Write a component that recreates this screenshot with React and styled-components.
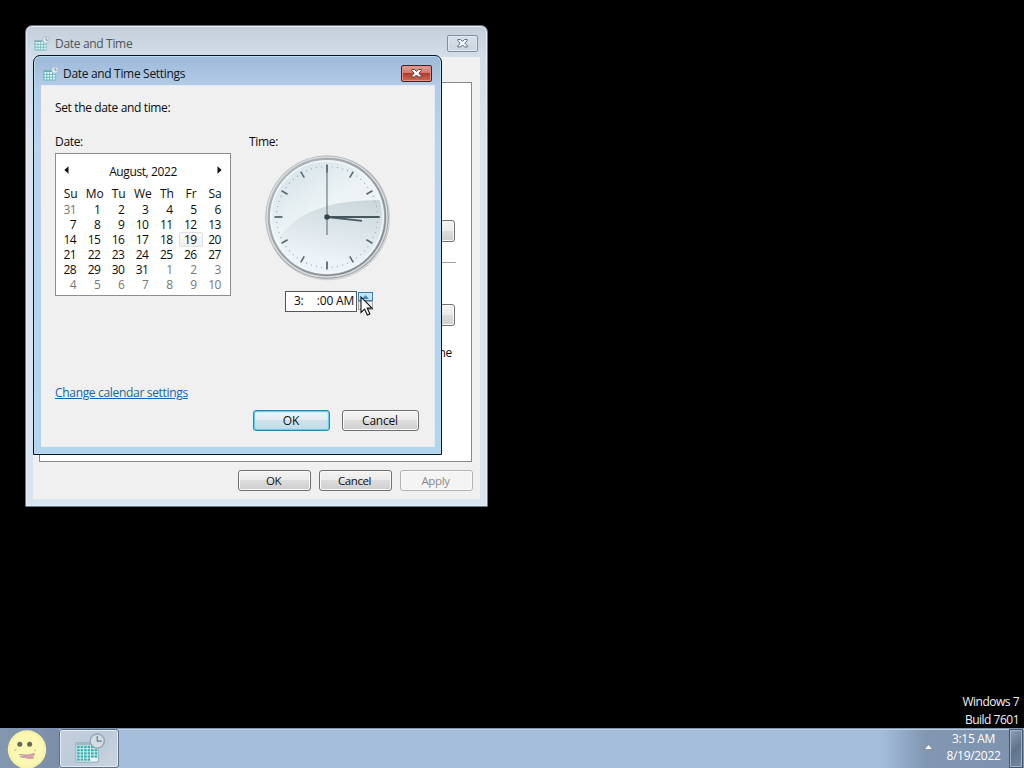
import styled, { createGlobalStyle, css } from "styled-components";

const DAY_NAMES = ["Su", "Mo", "Tu", "We", "Th", "Fr", "Sa"];

// Sunday July 31st up to Saturday September 10th
const days = Array.from({ length: 42 }, (_, i) => {
   if (i === 0) return { label: 31, muted: true };
   if (i <= 31) return { label: i, muted: false };
   return { label: i - 31, muted: true };
});

const ticks = Array.from({ length: 60 }, (_, i) => i);

const CalendarIcon = ({ size }) => (
   <svg width={size} height={size} viewBox="0 0 32 32">
      <path d="M2 10h23v20H2z" fill="#e9f6f8" stroke="#7f9da8" strokeWidth="0.8" />
      <path d="M2 9.5h23v3.5H2z" fill="#9dbac5" />
      {[0, 1, 2, 3, 4].map((r) =>
         [0, 1, 2, 3, 4, 5].map((c) =>
            r === 4 && c > 3 ? null : (
               <rect
                  key={`${r}-${c}`}
                  x={3.2 + c * 3.6}
                  y={13.5 + r * 3.2}
                  width="2.7"
                  height="2.3"
                  fill="#2faeb0"
               />
            )
         )
      )}
      <circle cx="24" cy="8.3" r="7.3" fill="#d3dde4" stroke="#9aa7b0" strokeWidth="1.5" />
      <path d="M24 3.200v5.200h4.600" fill="none" stroke="#667781" strokeWidth="1.2" />
   </svg>
);

const SmallCalendarIcon = ({ faded }) => (
   <svg width="16" height="16" viewBox="0 0 16 16" opacity={faded ? 0.85 : 1}>
      <path d="M.5 4.500h12v10H.5z" fill="#5fb3b8" />
      <path d="M.5 4.500h12" stroke="#8fa9ae" strokeWidth="1" />
      {[0, 1, 2].map((r) =>
         [0, 1, 2, 3].map((c) => (
            <rect
               key={`${r}-${c}`}
               x={1.5 + c * 2.8}
               y={6 + r * 2.8}
               width="2"
               height="1.9"
               fill="#e6fbfa"
            />
         ))
      )}
      <circle cx="12" cy="3.900" r="3.400" fill="#e3edf5" stroke="#9fb0be" strokeWidth="0.8" />
      <path d="M12 1.500v2.700h2" fill="none" stroke="#6f8393" strokeWidth="0.9" />
   </svg>
);

const CloseGlyph = ({ fill, edge }) => (
   <svg width="13" height="11" viewBox="0 0 13 11">
      <path
         d="M1.800 1.500h2.700l2 2 2-2h2.700v1.200L8.900 5.200l2.300 2.600v1.200H8.500l-2-2-2 2H1.800V7.800l2.300-2.600-2.300-2.500z"
         fill={fill}
         stroke={edge}
         strokeWidth="1"
         strokeLinejoin="round"
      />
   </svg>
);

const Clock = () => (
   <svg width="130" height="130" viewBox="-65 -65 130 130">
      <defs>
         <linearGradient id="rim" x1="0" y1="0" x2="1" y2="1">
            <stop offset="0" stopColor="#b9bec2" />
            <stop offset="0.5" stopColor="#989da2" />
            <stop offset="1" stopColor="#777d83" />
         </linearGradient>
         <linearGradient id="face" x1="0.15" y1="0" x2="0.8" y2="1">
            <stop offset="0" stopColor="#d3e1e7" />
            <stop offset="0.45" stopColor="#eef4f6" />
            <stop offset="1" stopColor="#edf2f5" />
         </linearGradient>
         <linearGradient id="wave" x1="0.75" y1="0" x2="0.5" y2="1">
            <stop offset="0" stopColor="#cbd8db" />
            <stop offset="0.4" stopColor="#dce5e9" />
            <stop offset="0.8" stopColor="#edf3f8" />
         </linearGradient>
         <clipPath id="dial">
            <circle r="56.5" />
         </clipPath>
      </defs>
      <circle cx="0.8" cy="1" r="62.3" fill="#cfd1d3" />
      <circle r="61.5" fill="url(#rim)" />
      <circle r="60" fill="none" stroke="#d9dde0" strokeWidth="1.6" />
      <circle r="57.5" fill="url(#face)" stroke="#9ca4aa" strokeWidth="0.8" />
      <path
         d="M-46 18C-30 -4 2 -18 58 -17V60H-46z"
         fill="url(#wave)"
         clipPath="url(#dial)"
      />
      <circle r="56" fill="none" stroke="#f2f7f9" strokeWidth="2" opacity="0.8" />
      {ticks.map((i) =>
         i % 5 === 0 ? (
            <line
               key={i}
               y1="-52.5"
               y2={i % 15 === 0 ? -44.5 : -45.5}
               stroke="#596a70"
               strokeWidth={i % 15 === 0 ? 1.8 : 1.6}
               transform={`rotate(${i * 6})`}
            />
         ) : (
            <circle key={i} cy="-50.5" r="0.6" fill="#93a2a9" transform={`rotate(${i * 6})`} />
         )
      )}
      <line x1="0" y1="0" x2="35" y2="3.8" stroke="#4a5c61" strokeWidth="1.8" />
      <line x1="0" y1="0" x2="52.5" y2="0" stroke="#45575c" strokeWidth="1.8" />
      <line x1="0" y1="-52" x2="0" y2="18" stroke="#5d7075" strokeWidth="1.1" />
      <circle r="2.7" fill="#33474d" />
   </svg>
);

const Smiley = () => (
   <svg width="40" height="38" viewBox="0 0 40 38">
      <circle cx="20" cy="19.5" r="19.2" fill="#f6f3a9" />
      <circle cx="20" cy="19.5" r="16.5" fill="#fbf8b4" />
      <circle cx="12.8" cy="14.2" r="2.5" fill="#66655f" />
      <circle cx="22.6" cy="14.2" r="2.5" fill="#66655f" />
      <path d="M7 20.500l2.500-1M27 19.500l2 1.500" stroke="#d6a984" strokeWidth="1" />
      <path
         d="M12 24.500l8 .6 7.500-1.600-.5 2-3 .3 3 2.200-5 .4-9-1.600 7-1z"
         fill="#d9a5ad"
         stroke="#c497a0"
         strokeWidth="0.8"
      />
   </svg>
);

const Cursor = () => (
   <svg width="14" height="21" viewBox="0 0 14 21">
      <path
         d="M1 1v15.500l3.600-3.400 2.700 6 2.600-1.200-2.700-5.800H12z"
         fill="#fff"
         stroke="#111"
         strokeWidth="1.1"
      />
   </svg>
);

export default function App() {
   return (
      <>
         <GlobalStyle />
         <Screen>
            <Desktop>
               <Watermark>
                  <Text>Windows 7</Text>
                  <Text>Build 7601</Text>
               </Watermark>
            </Desktop>

            <BackWindow>
               <BackTitle>
                  <SmallCalendarIcon faded />
                  <TitleText $faded>Date and Time</TitleText>
                  <CloseButton>
                     <CloseGlyph fill="#f4f7fa" edge="#5f6d80" />
                  </CloseButton>
               </BackTitle>
               <BackClient>
                  <TabPage>
                     <HiddenButton />
                     <Separator />
                     <HiddenButton />
                     <PageNote>change the time zone</PageNote>
                  </TabPage>
                  <BackButtons>
                     <Button $width={73} $tight>OK</Button>
                     <Button $width={73} $tight>Cancel</Button>
                     <Button $width={73} $tight $disabled>Apply</Button>
                  </BackButtons>
               </BackClient>
            </BackWindow>

            <FrontWindow>
               <FrontTitle>
                  <SmallCalendarIcon />
                  <TitleText>Date and Time Settings</TitleText>
                  <CloseButton $active>
                     <CloseGlyph fill="#fff" edge="#5b4444" />
                  </CloseButton>
               </FrontTitle>
               <FrontClient>
                  <Heading>Set the date and time:</Heading>
                  <Columns>
                     <DateColumn>
                        <Label>Date:</Label>
                        <Calendar>
                           <MonthBar>
                              <svg width="5" height="8" viewBox="0 0 5 8">
                                 <path d="M4.500 .3v7.400L.3 4z" fill="#111" />
                              </svg>
                              <Month>August, 2022</Month>
                              <svg width="5" height="8" viewBox="0 0 5 8">
                                 <path d="M.5 .3v7.400L4.700 4z" fill="#111" />
                              </svg>
                           </MonthBar>
                           <Grid>
                              {DAY_NAMES.map((name) => (
                                 <DayName key={name}>{name}</DayName>
                              ))}
                              {days.map((day, index) => (
                                 <Day
                                    key={index}
                                    $muted={day.muted}
                                    $selected={!day.muted && day.label === 19}
                                 >
                                    {day.label}
                                 </Day>
                              ))}
                           </Grid>
                        </Calendar>
                     </DateColumn>
                     <TimeColumn>
                        <Label>Time:</Label>
                        <ClockHolder>
                           <Clock />
                        </ClockHolder>
                        <TimeRow>
                           <TimeField>
                              <span>3:</span>
                              <TimeRest>:00 AM</TimeRest>
                           </TimeField>
                           <Spinner>
                              <SpinButton $hot>
                                 <svg width="7" height="4" viewBox="0 0 7 4">
                                    <path d="M0 4L3.500 0 7 4z" fill="#4787b2" />
                                 </svg>
                              </SpinButton>
                              <SpinButton>
                                 <svg width="7" height="4" viewBox="0 0 7 4">
                                    <path d="M0 0h7L3.500 4z" fill="#555" />
                                 </svg>
                              </SpinButton>
                           </Spinner>
                        </TimeRow>
                     </TimeColumn>
                  </Columns>
                  <Link>Change calendar settings</Link>
                  <FrontButtons>
                     <Button $width={77} $primary>OK</Button>
                     <Button $width={77}>Cancel</Button>
                  </FrontButtons>
               </FrontClient>
            </FrontWindow>

            <Taskbar>
               <Start>
                  <Smiley />
               </Start>
               <TaskButton>
                  <CalendarIcon size={31} />
               </TaskButton>
               <Tray>
                  <TrayArrow width="9" height="6" viewBox="0 0 9 6">
                     <path d="M.3 5.500L4.500 .5l4.200 5z" fill="#fff" stroke="#4f6279" strokeWidth="0.5" />
                  </TrayArrow>
                  <TrayClock>
                     <span>3:15 AM</span>
                     <span>8/19/2022</span>
                  </TrayClock>
                  <ShowDesktop />
               </Tray>
            </Taskbar>

            <Pointer>
               <Cursor />
            </Pointer>
         </Screen>
      </>
   );
}

const GlobalStyle = createGlobalStyle`
   * {
      box-sizing: border-box;
   }

   body {
      margin: 0;
      background: #000;
      font-family: "Open Sans", "Noto Sans", sans-serif;
      font-size: 12px;
      letter-spacing: -0.32px;
      color: #0c0c0c;
      overflow: hidden;
   }

   svg {
      display: block;
      flex: none;
   }
`;

const Screen = styled.div`
   position: relative;
   display: flex;
   flex-direction: column;
   width: 1024px;
   height: 768px;
   overflow: hidden;
`;

const Desktop = styled.main`
   flex: 1;
   display: flex;
   align-items: flex-end;
   justify-content: flex-end;
`;

const Watermark = styled.div`
   padding: 0 5px 0 0;
   margin-bottom: -1px;
   color: #f2f2f2;
   text-align: right;
   letter-spacing: -0.5px;
`;

const Text = styled.div`
   line-height: 18px;
`;

const windowFrame = css`
   position: absolute;
   display: flex;
   flex-direction: column;
`;

const BackWindow = styled.section`
   ${windowFrame}
   left: 25px;
   top: 25px;
   width: 463px;
   height: 482px;
   padding: 0 7px 7px;
   border: 1px solid #6d7780;
   border-radius: 7px 7px 0 0;
   background: linear-gradient(#c3ced9, #d3dde8 30px, #dce4ec 120px, #d9e5ef);
   box-shadow: inset 0 0 0 1px #e6edf3;
`;

const FrontWindow = styled.section`
   ${windowFrame}
   left: 33px;
   top: 55px;
   width: 409px;
   height: 400px;
   padding: 0 6px 7px 7px;
   border: 1px solid #07131f;
   border-radius: 7px 7px 0 0;
   background: linear-gradient(#9db9d9, #b3cbe6 30px, #bdd2ec 90px, #b3d3f0 240px, #b2d4ec);
   box-shadow: inset 0 0 0 1px #b9dcee;
`;

const titleBar = css`
   display: flex;
   align-items: center;
   flex: none;
`;

const BackTitle = styled.header`
   ${titleBar}
   height: 31px;
   padding: 4px 2px 0 1px;
`;

const FrontTitle = styled.header`
   ${titleBar}
   height: 29px;
   padding: 6px 3px 0 2px;
`;

const TitleText = styled.h1`
   flex: 1;
   margin: 0 0 0 ${({ $faded }) => ($faded ? 5 : 4)}px;
   font-size: inherit;
   font-weight: 400;
   line-height: 16px;
   color: ${({ $faded }) => ($faded ? "#4c545c" : "#0d1722")};
`;

const CloseButton = styled.button`
   display: flex;
   align-items: center;
   justify-content: center;
   width: 31px;
   height: 17px;
   padding: 0;
   border: 1px solid ${({ $active }) => ($active ? "#4c2023" : "#7f8ea3")};
   border-radius: 2px;
   background: ${({ $active }) =>
      $active
         ? "linear-gradient(#e0a198, #cf7568 48%, #b43b2a 50%, #cf6a56)"
         : "linear-gradient(#d7e0e9, #cbd6e2)"};
   box-shadow: inset 0 0 0 1px ${({ $active }) => ($active ? "#dd9288" : "#dfe7ef")};
`;

const BackClient = styled.div`
   flex: 1;
   padding: 25px 8px 0 6px;
   background: #f0f0f0;
`;

const TabPage = styled.div`
   display: flex;
   flex-direction: column;
   align-items: flex-end;
   width: 433px;
   height: 380px;
   padding: 137px 16px 0 0;
   border: 1px solid #84878c;
   background: #fff;
`;

const buttonFace = "linear-gradient(#f3f3f3, #ebebeb 48%, #dcdcdc 50%, #cfcfcf)";

const HiddenButton = styled.div`
   width: 140px;
   height: 22px;
   border: 1px solid #707070;
   border-radius: 3px;
   background: ${buttonFace};
   box-shadow: inset 0 0 0 1px #fafafa;
`;

const Separator = styled.div`
   width: 400px;
   height: 1px;
   margin: 20px -1px 41px 0;
   background: #a0a0a0;
`;

const PageNote = styled.p`
   margin: 19px 3px 0 0;
   line-height: 16px;
`;

const BackButtons = styled.div`
   display: flex;
   gap: 8px;
   justify-content: flex-end;
   width: 434px;
   padding-top: 8px;
`;

const Button = styled.button`
   width: ${({ $width }) => $width}px;
   height: 21px;
   padding: ${({ $tight }) => ($tight ? "1px 2px 0 0" : "0 1px 0 0")};
   border: 1px solid #707070;
   border-radius: 3px;
   background: ${buttonFace};
   box-shadow: inset 0 0 0 1px #fafafa;
   color: #111;
   font: inherit;
   font-size: ${({ $tight }) => ($tight ? 11.5 : 12)}px;
   line-height: 18px;
   letter-spacing: ${({ $tight }) => ($tight ? "-0.4px" : "-0.2px")};

   ${({ $primary }) =>
      $primary &&
      css`
         border-color: #2d86a3;
         background: linear-gradient(#eef5f8, #e2edf2 48%, #cfe2eb 50%, #c3dbe6);
         box-shadow: inset 0 0 0 1px #5fd0ee, inset 0 0 2px 1px #9be0f2;
      `}

   ${({ $disabled }) =>
      $disabled &&
      css`
         border-color: #b0b4b8;
         background: #f4f4f4;
         color: #8a8a8a;
      `}
`;

const FrontClient = styled.div`
   flex: 1;
   padding: 14px 14px 0 14px;
   border: 1px solid #e3ebf3;
   border-width: 1px 1px 1px 0;
   background: #f0f0f0;
`;

const Heading = styled.p`
   margin: 0;
   line-height: 16px;
   letter-spacing: -0.36px;
`;

const Columns = styled.div`
   display: flex;
   height: 269px;
   padding-top: 18px;
`;

const DateColumn = styled.div`
   width: 194px;
`;

const TimeColumn = styled.div`
   width: 170px;
`;

const Label = styled.div`
   height: 19px;
   line-height: 16px;
`;

const Calendar = styled.div`
   width: 176px;
   height: 143px;
   border: 1px solid #8a8d92;
   background: #fff;
`;

const MonthBar = styled.div`
   display: flex;
   align-items: center;
   justify-content: space-between;
   height: 32px;
   padding: 0 8px;

   svg {
      margin-bottom: 1px;
   }
`;

const Month = styled.span`
   padding-top: 2px;
   letter-spacing: -0.4px;
`;

const Grid = styled.div`
   display: grid;
   grid-template-columns: repeat(7, 24.1px);
   grid-template-rows: 15px;
   grid-auto-rows: 15px;
   padding-left: 2.5px;
`;

const DayName = styled.span`
   line-height: 15px;
   text-align: center;
   letter-spacing: -0.1px;
`;

const Day = styled.span`
   position: relative;
   top: 1px;
   padding-right: ${({ $selected }) => ($selected ? 5.5 : 6.5)}px;
   line-height: ${({ $selected }) => ($selected ? 13 : 15)}px;
   text-align: right;
   letter-spacing: -0.6px;
   color: ${({ $muted }) => ($muted ? "#777" : "#0c0c0c")};
   ${({ $selected }) =>
      $selected &&
      css`
         border: 1px solid #e0e0e2;
         border-radius: 2px;
         background: linear-gradient(#fafafa, #f1f1f1);
      `}
`;

const ClockHolder = styled.div`
   display: flex;
   height: 138px;
   padding: 0 0 0 12.5px;

   svg {
      margin-top: -1.5px;
      transform: translate(-0.01px, 0);
   }
`;

const TimeRow = styled.div`
   display: flex;
   padding-left: 36px;
   gap: 1px;
`;

const TimeField = styled.div`
   display: flex;
   justify-content: space-between;
   width: 72px;
   height: 21px;
   padding: 0 2px 0 8px;
   border: 1px solid #54585c;
   background: #fff;
   line-height: 18px;
`;

const TimeRest = styled.span`
   white-space: nowrap;
   letter-spacing: -0.2px;
`;

const Spinner = styled.div`
   display: flex;
   flex-direction: column;
   padding-top: 1px;
`;

const SpinButton = styled.div`
   display: flex;
   align-items: center;
   justify-content: center;
   width: 15px;
   height: 9px;
   border: 1px solid ${({ $hot }) => ($hot ? "#3c7fb1" : "#a5a8ab")};
   background: ${({ $hot }) => ($hot ? "#c4e5f6" : "#ededed")};
`;

const Link = styled.a`
   display: block;
   width: max-content;
   line-height: 16px;
   color: #1463b4;
   text-decoration: underline;
   text-underline-offset: 1px;
`;

const FrontButtons = styled.div`
   display: flex;
   justify-content: flex-end;
   gap: 12px;
   padding: 9px 1px 0 0;
`;

const Taskbar = styled.footer`
   display: flex;
   height: 40px;
   border-top: 1px solid #7f97b0;
   background: linear-gradient(90deg, #a5bedc 880px, #8197b2 925px, #7c92ad);
   box-shadow: inset 0 1px 0 #bfd0e2;
`;

const Start = styled.div`
   display: flex;
   width: 59px;
   padding: 1px 0 0 7px;
   background: linear-gradient(90deg, #8497b0, #7c8da8);
`;

const TaskButton = styled.div`
   display: flex;
   align-items: center;
   justify-content: center;
   width: 60px;
   height: 39px;
   border: 1px solid #5e7084;
   border-radius: 3px;
   background: linear-gradient(135deg, #c5d0dd, #bccad9 50%, #cbd5df);
   box-shadow: inset 0 0 0 1px #e3eaf1;
`;

const Tray = styled.div`
   display: flex;
   align-items: center;
   margin-left: auto;
   color: #fff;
`;

const TrayArrow = styled.svg`
   margin-bottom: 3px;
`;

const TrayClock = styled.time`
   display: flex;
   flex-direction: column;
   align-items: center;
   width: 76px;
   padding: 0 0 3px 5px;
   line-height: 17px;
   letter-spacing: -0.3px;
`;

const ShowDesktop = styled.div`
   align-self: stretch;
   width: 14px;
   margin-right: 1px;
   border: 1px solid #44566c;
   background: linear-gradient(135deg, #8ea2bb, #5f738d 50%, #7388a2);
   box-shadow: inset 0 0 0 1px #a3b3c7;
`;

const Pointer = styled.div`
   position: absolute;
   left: 360px;
   top: 296px;
`;
